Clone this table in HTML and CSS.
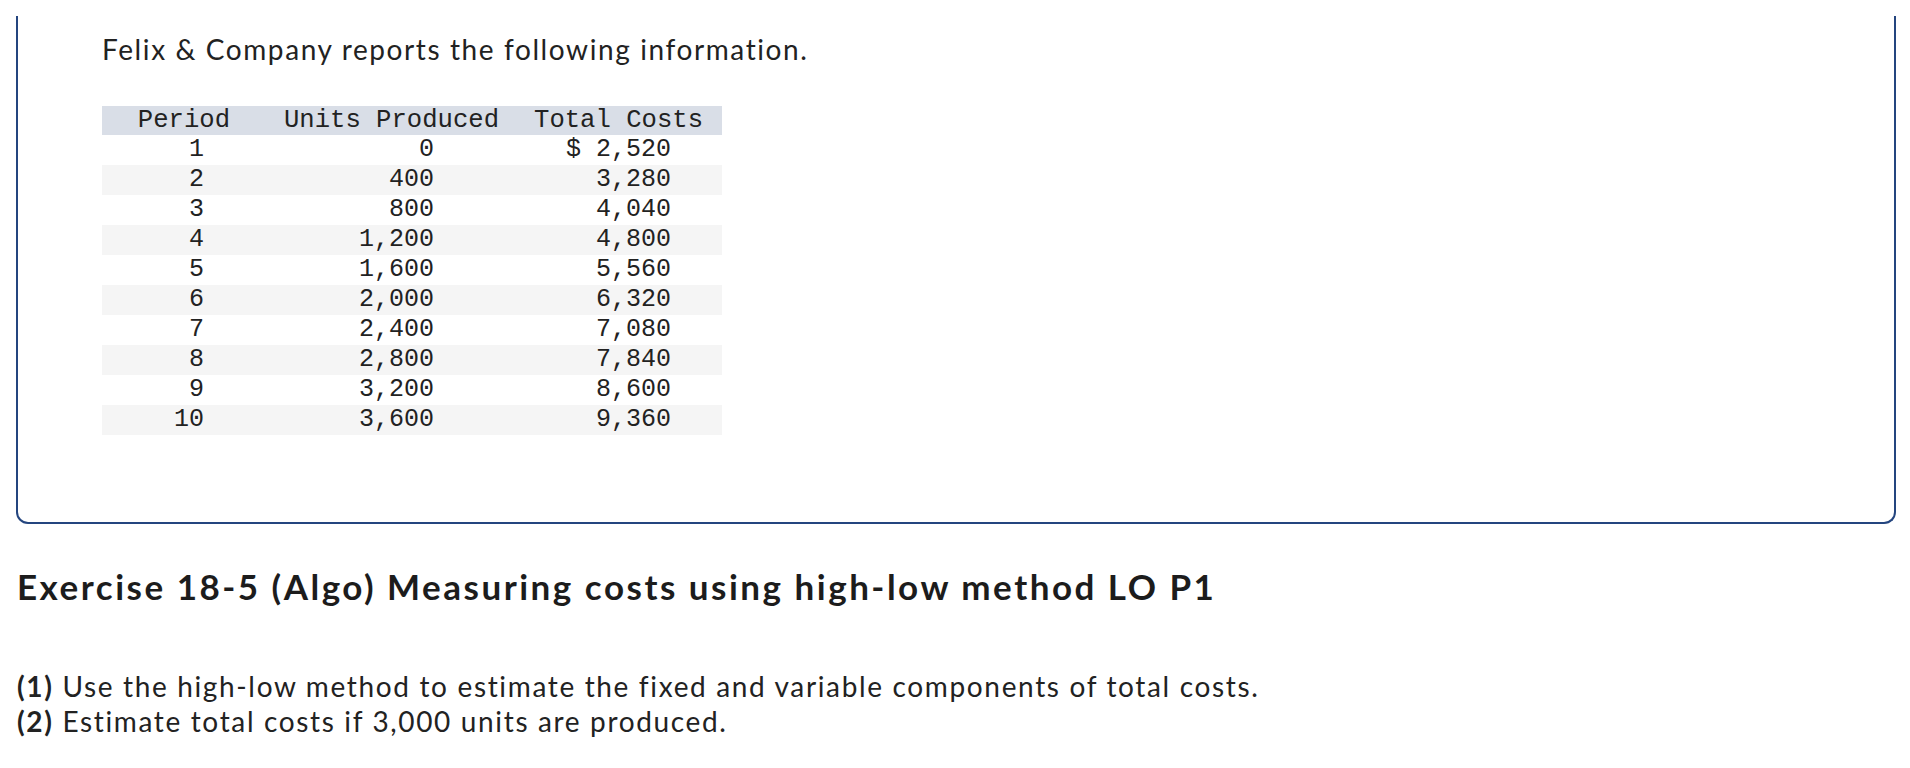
FILE: index.html
```html
<!DOCTYPE html>
<html>
<head>
<meta charset="utf-8">
<link rel="stylesheet" href="styles.css">
</head>
<body>
<div class="page">
  <div class="box">
    <p class="intro">Felix &amp; Company reports the following information.</p>
    <div class="data">
      <div class="hd c1">Period</div><div class="hd c2">Units Produced</div><div class="hd c3">Total Costs</div>
      <div class="cell c1">1</div><div class="cell c2">0</div><div class="cell c3">$ 2,520</div>
      <div class="cell c1 alt">2</div><div class="cell c2 alt">400</div><div class="cell c3 alt">3,280</div>
      <div class="cell c1">3</div><div class="cell c2">800</div><div class="cell c3">4,040</div>
      <div class="cell c1 alt">4</div><div class="cell c2 alt">1,200</div><div class="cell c3 alt">4,800</div>
      <div class="cell c1">5</div><div class="cell c2">1,600</div><div class="cell c3">5,560</div>
      <div class="cell c1 alt">6</div><div class="cell c2 alt">2,000</div><div class="cell c3 alt">6,320</div>
      <div class="cell c1">7</div><div class="cell c2">2,400</div><div class="cell c3">7,080</div>
      <div class="cell c1 alt">8</div><div class="cell c2 alt">2,800</div><div class="cell c3 alt">7,840</div>
      <div class="cell c1">9</div><div class="cell c2">3,200</div><div class="cell c3">8,600</div>
      <div class="cell c1 alt">10</div><div class="cell c2 alt">3,600</div><div class="cell c3 alt">9,360</div>
    </div>
  </div>
  <h2 class="title">Exercise 18-5 (Algo) Measuring costs using high-low method LO P1</h2>
  <p class="task"><b>(1)</b> Use the high-low method to estimate the fixed and variable components of total costs.<br><b>(2)</b> Estimate total costs if 3,000 units are produced.</p>
</div>
</body>
</html>
```

FILE: styles.css
```css
html, body {
  margin: 0;
  padding: 0;
  background: #ffffff;
}
body {
  font-family: Lato, "Open Sans", sans-serif;
  color: #222222;
}
.page {
  padding: 16px 14px 0 16px;
}
.box {
  height: 506px;
  border: 2px solid #24457f;
  border-top: none;
  border-radius: 0 0 12px 12px;
  padding: 0 0 0 84px;
}
.intro {
  margin: 0;
  padding-top: 15px;
  font-size: 28px;
  letter-spacing: 1.6px;
  line-height: 36px;
  color: #222222;
}
.data {
  margin-top: 39px;
  display: grid;
  grid-template-columns: 153px 261px 206px;
  width: 620px;
}
.hd {
  background: #d9dee7;
  height: 29px;
  line-height: 30px;
  font-family: "Liberation Mono", "Courier New", monospace;
  font-size: 25.6px;
  color: #222222;
  text-align: right;
}
.hd.c1 { padding-right: 25px; }
.hd.c2 { padding-right: 17px; }
.hd.c3 { padding-right: 19px; }
.cell {
  height: 30px;
  line-height: 30px;
  font-family: "Liberation Mono", "DejaVu Sans Mono", monospace;
  font-size: 25px;
  color: #222222;
  text-align: right;
  background: #ffffff;
}
.cell.alt { background: #f5f5f5; }
.cell.c1 { padding-right: 51px; }
.cell.c2 { padding-right: 82px; }
.cell.c3 { padding-right: 51px; }
.title {
  margin: 40px 0 0 1px;
  font-size: 35px;
  font-weight: 700;
  letter-spacing: 2.5px;
  line-height: 44px;
  color: #1c1c1c;
}
.task {
  margin: 61px 0 0 1px;
  font-size: 28px;
  letter-spacing: 1.65px;
  line-height: 35px;
  color: #222222;
}
.task b { font-weight: 700; }
```
